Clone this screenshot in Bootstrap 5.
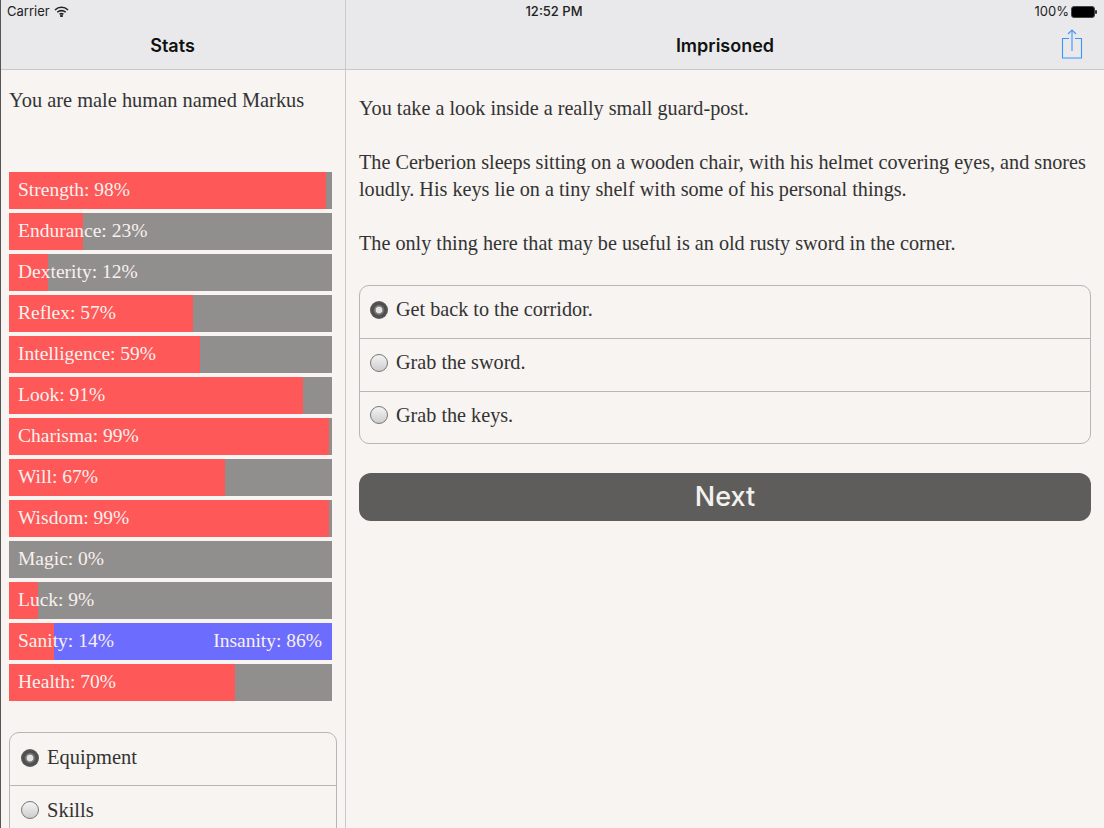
<!DOCTYPE html>
<html lang="en">
<head>
<meta charset="utf-8">
<title>Imprisoned</title>
<link href="https://cdn.jsdelivr.net/npm/bootstrap@5.3.0/dist/css/bootstrap.min.css" rel="stylesheet">
<style>
html,body{height:828px;overflow:hidden;}
body{background:#f7f4f1;font-family:"Liberation Serif",serif;color:#333;font-size:20.2px;}
.app-frame{height:828px;border-left:1px solid #555;}
.top-bar{height:70px;background:#e9e9eb;border-bottom:1px solid #c9c9cb;}
.status-row{height:23px;padding:0 7px 0 6px;font-family:Inter,"Liberation Sans",sans-serif;font-size:13px;color:#222;}
.status-col{flex:1 1 0;}
.status-time{margin-left:4px;}
.battery-group{gap:2px;}
.title-row{height:46px;padding-bottom:1px;}
.title-left{width:345px;border-right:1px solid #c9c9cb;margin:-23px 0 -1px;padding:22px 1px 1px 0;}
.title-text{font-family:Inter,"Liberation Sans",sans-serif;font-weight:600;font-size:18px;color:#111;}
.title-right{position:relative;}
.share-btn{position:absolute;right:21px;top:6px;line-height:0;}
.content-row{height:758px;}
.side-pane{width:345px;border-right:1px solid #c9c9cb;padding:0 13px 0 8px;flex:none;overflow:hidden;}
.intro-line{height:102px;padding-top:16px;line-height:28px;font-size:20.4px;}
.bars-stack{display:flex;flex-direction:column;gap:4px;width:323px;}
.stat-bar{height:37px;background:#918f8e;color:#f8f1ee;padding:0 10px 0 9px;line-height:35px;font-size:19.5px;display:flex;justify-content:space-between;position:relative;overflow:hidden;}
.stat-bar.alt-bar{background:#6c6cfe;}
.stat-fill{position:absolute;left:0;top:0;bottom:0;background:#fe5858;}
.stat-label{position:relative;}
.choice-box{border:1px solid #b6b6b6;border-radius:10px;background:transparent;}
.side-box{margin-top:31px;width:328px;font-size:20.5px;}
.choice-item{height:53px;display:flex;align-items:center;gap:8px;padding:0 0 5px 10px;border-bottom:1px solid #b6b6b6;}
.side-box .choice-item{gap:8px;padding:0 0 3px 11px;}
.choice-item:last-child{border-bottom:0;height:51px;}
.radio-dot{width:18px;height:18px;border-radius:50%;border:1px solid #777;background:linear-gradient(#f4f4f4,#cdcdcd);flex:none;}
.radio-dot.on{border:0;background:radial-gradient(circle,#e2e2e2 0 3px,#8a8a8a 3.6px,#4a4a4a 6px,#5c5c5c 9px);}
.main-pane{padding:0 13px 0 13px;}
.story-text{padding-top:25px;line-height:27px;margin-bottom:28px;}
.story-text p{margin-bottom:27px;}
.story-text p:last-child{margin-bottom:0;}
.next-btn{display:block;width:100%;height:48px;margin-top:29px;background:#5e5d5b;color:#f4f2ef;border:0;border-radius:12px;font-family:Inter,"Liberation Sans",sans-serif;font-weight:500;font-size:27px;line-height:48px;padding:0;}
</style>
</head>
<body>
<div class="app-frame">
  <div class="top-bar">
    <div class="status-row d-flex align-items-center">
      <div class="status-col d-flex align-items-center gap-1">
        <span>Carrier</span>
        <svg width="15" height="11" viewBox="0 0 15 11" fill="none" stroke="#222" stroke-width="1.6"><path d="M1 4a9.2 9.2 0 0 1 13 0"/><path d="M3.3 6.300a6 6 0 0 1 8.400 0"/><path d="M5.600 8.400a2.800 2.800 0 0 1 3.800 0"/><circle cx="7.500" cy="10" r=".6" fill="#222"/></svg>
      </div>
      <div class="fw-medium status-time">12:52 PM</div>
      <div class="status-col battery-group d-flex align-items-center justify-content-end">
        <span>100%</span>
        <svg width="26" height="12" viewBox="0 0 26 12"><rect x=".5" y=".5" width="23" height="11" rx="2.500" fill="#000" stroke="#444"/><rect x="24" y="4" width="2" height="4" rx="1" fill="#333"/></svg>
      </div>
    </div>
    <div class="title-row d-flex">
      <div class="title-left title-text d-flex align-items-center justify-content-center">Stats</div>
      <div class="title-right flex-grow-1 title-text d-flex align-items-center justify-content-center">Imprisoned
        <span class="share-btn"><svg width="22" height="30" viewBox="0 0 22 30" fill="none" stroke="#3a94fb" stroke-width="1.1"><path d="M8 9.500H1.500V29h19V9.500H14"/><path d="M11 22V1"/><path d="M7 5l4-4 4 4"/></svg></span>
      </div>
    </div>
  </div>
  <div class="content-row d-flex">
    <div class="side-pane">
      <div class="intro-line">You are male human named Markus</div>
      <div class="bars-stack">
        <div class="stat-bar"><div class="stat-fill" style="width:98%"></div><span class="stat-label">Strength: 98%</span></div>
        <div class="stat-bar"><div class="stat-fill" style="width:23%"></div><span class="stat-label">Endurance: 23%</span></div>
        <div class="stat-bar"><div class="stat-fill" style="width:12%"></div><span class="stat-label">Dexterity: 12%</span></div>
        <div class="stat-bar"><div class="stat-fill" style="width:57%"></div><span class="stat-label">Reflex: 57%</span></div>
        <div class="stat-bar"><div class="stat-fill" style="width:59%"></div><span class="stat-label">Intelligence: 59%</span></div>
        <div class="stat-bar"><div class="stat-fill" style="width:91%"></div><span class="stat-label">Look: 91%</span></div>
        <div class="stat-bar"><div class="stat-fill" style="width:99%"></div><span class="stat-label">Charisma: 99%</span></div>
        <div class="stat-bar"><div class="stat-fill" style="width:67%"></div><span class="stat-label">Will: 67%</span></div>
        <div class="stat-bar"><div class="stat-fill" style="width:99%"></div><span class="stat-label">Wisdom: 99%</span></div>
        <div class="stat-bar"><div class="stat-fill" style="width:0%"></div><span class="stat-label">Magic: 0%</span></div>
        <div class="stat-bar"><div class="stat-fill" style="width:9%"></div><span class="stat-label">Luck: 9%</span></div>
        <div class="stat-bar alt-bar"><div class="stat-fill" style="width:14%"></div><span class="stat-label">Sanity: 14%</span><span class="stat-label">Insanity: 86%</span></div>
        <div class="stat-bar"><div class="stat-fill" style="width:70%"></div><span class="stat-label">Health: 70%</span></div>
      </div>
      <div class="choice-box side-box">
        <div class="choice-item"><span class="radio-dot on"></span>Equipment</div>
        <div class="choice-item"><span class="radio-dot"></span>Skills</div>
      </div>
    </div>
    <div class="main-pane flex-grow-1">
      <div class="story-text">
        <p>You take a look inside a really small guard-post.</p>
        <p>The Cerberion sleeps sitting on a wooden chair, with his helmet covering eyes, and snores loudly. His keys lie on a tiny shelf with some of his personal things.</p>
        <p>The only thing here that may be useful is an old rusty sword in the corner.</p>
      </div>
      <div class="choice-box">
        <div class="choice-item"><span class="radio-dot on"></span>Get back to the corridor.</div>
        <div class="choice-item"><span class="radio-dot"></span>Grab the sword.</div>
        <div class="choice-item"><span class="radio-dot"></span>Grab the keys.</div>
      </div>
      <button class="next-btn btn" type="button">Next</button>
    </div>
  </div>
</div>
<script src="https://cdn.jsdelivr.net/npm/bootstrap@5.3.0/dist/js/bootstrap.bundle.min.js"></script>
</body>
</html>
